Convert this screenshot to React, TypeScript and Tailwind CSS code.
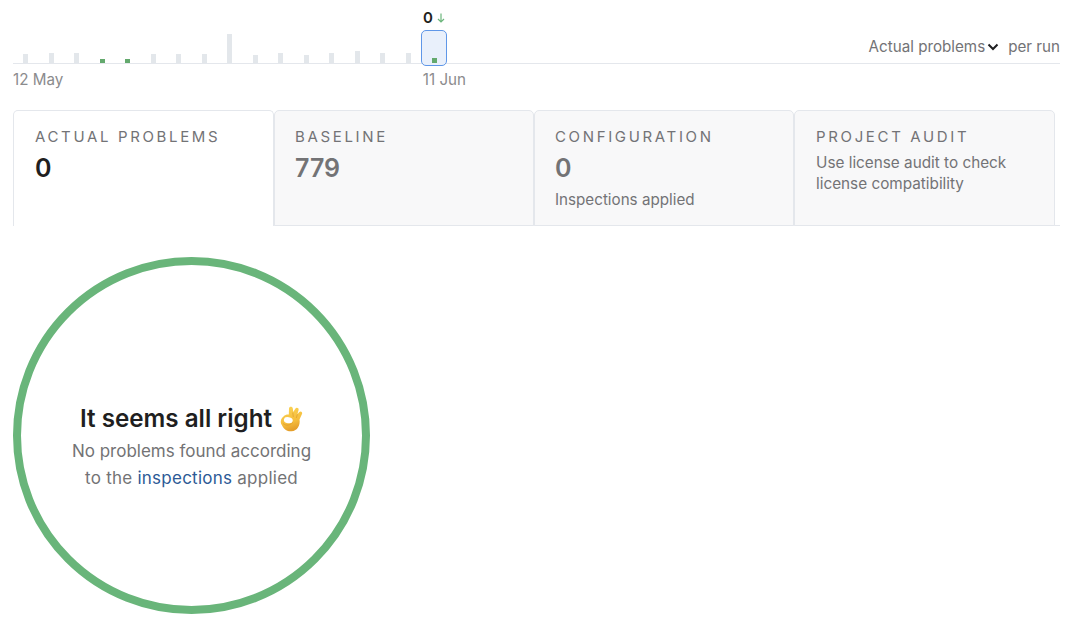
const bars = [9, 10, 10, 0, 0, 9, 9, 9, 29, 8, 10, 8, 10, 12, 10, 10];

function OkHand() {
  return (
    <svg width="24" height="26" viewBox="0 0 24 26" className="shrink-0">
      <defs>
        <linearGradient id="hand" x1="0" y1="0" x2="0.300" y2="1">
          <stop offset="0" stopColor="#fbd556" />
          <stop offset="0.700" stopColor="#f5bd3c" />
          <stop offset="1" stopColor="#e59f2b" />
        </linearGradient>
      </defs>
      <path
        d="M4.500 10.500 C6 8.800 8 8.300 9.800 8.500 L10 2.500 C10.100 0.400 13.300 0.300 13.800 2.400 L14.300 6 L16.300 2.700 C17.400 1 20.100 2 19.600 4 L18.400 8.300 L20.300 6 C21.500 4.600 23.800 5.900 23.100 7.700 L20.500 13.500 C21.500 19 18.500 25 12.500 25.300 C6.500 25.600 4 21.500 2.500 18.500 C1 15.500 2 12.500 4.500 10.500 Z"
        fill="url(#hand)"
      />
      <ellipse cx="9.300" cy="14.200" rx="4.500" ry="3" fill="#ffffff" transform="rotate(10 9.300 14.200)" />
      <path d="M13.800 6.500 L14.300 11 M18.400 8.300 L17.300 12" fill="none" stroke="#dc9c2c" strokeWidth="0.700" />
      <path d="M4 17.500 C7 20 11 19.500 13.800 16.500" fill="none" stroke="#dc9c2c" strokeWidth="0.700" />
    </svg>
  );
}

function Tab({
  title,
  value,
  sub,
  active,
  width,
  inset,
  children,
}: {
  title: string;
  value?: string;
  sub?: string;
  active?: boolean;
  width: string;
  inset: string;
  children?: React.ReactNode;
}) {
  return (
    <div
      className={`${width} ${inset} h-[116px] shrink-0 rounded-t-[5px] border-t border-l border-r border-[#e4e7ec] pt-[16px] ${
        active ? "bg-white" : "bg-[#f8f8f9] border-b"
      }`}
    >
      <div className="text-[15px] leading-[20px] tracking-[2.650px] text-[#737376]">{title}</div>
      {value && (
        <div className={`mt-[6px] text-[25px] leading-[30px] font-semibold ${active ? "text-[#1f1f21]" : "text-[#737375]"}`}>
          {value}
        </div>
      )}
      {sub && <div className="mt-[7px] text-[15.200px] leading-[20px] text-[#737376]">{sub}</div>}
      {children}
    </div>
  );
}

export default function App() {
  return (
    <div className="w-[1080px] h-[643px] bg-white overflow-hidden pl-[13px] pr-[20px] pt-[6px] font-['Inter',sans-serif]">
      <div className="h-[24px] pl-[410px] flex items-center gap-[4px]">
        <span className="text-[15px] font-semibold text-[#1f1f21]">0</span>
        <svg width="8" height="10" viewBox="0 0 8 10" fill="none" stroke="#6cb67c" strokeWidth="1.200">
          <path d="M4 0.500 V9 M1 6 L4 9 L7 6" />
        </svg>
      </div>

      <div className="h-[34px] flex items-end justify-between border-b border-[#e4e7ec]">
        <div className="flex items-end gap-[20.500px] pl-[10px]">
          {bars.map((h, i) =>
            h === 0 ? (
              <div key={i} className="w-[5px] h-[4px] bg-[#63a96d]" />
            ) : (
              <div key={i} style={{ height: h }} className="w-[5px] bg-[#e3e7eb]" />
            ),
          )}
          <div className="w-[26px] h-[36px] -ml-[10px] -mb-[3px] flex items-end justify-center pb-[2px] rounded-[5px] border border-[#5f97e8] bg-[#e9f0fb]">
            <div className="w-[5px] h-[5px] bg-[#63a96d]" />
          </div>
        </div>
        <div className="flex items-center mb-[6px] text-[15.200px] leading-[20px] text-[#737376]">
          <span>Actual problems</span>
          <svg width="12" height="8" viewBox="0 0 12 8" fill="none" stroke="#1f1f21" strokeWidth="2" className="ml-[2px]">
            <path d="M1.500 1.500 L6 6 L10.500 1.500" />
          </svg>
          <span className="ml-[9px]">per run</span>
        </div>
      </div>

      <div className="flex justify-between mt-[6px] pr-[594px] h-[20px] text-[15.200px] leading-[20px] text-[#8b8b8d]">
        <span>12 May</span>
        <span>11 Jun</span>
      </div>

      <div className="mt-[20px] flex border-b border-[#e4e7ec] h-[116px]">
        <Tab title="ACTUAL PROBLEMS" value="0" active width="w-[261px]" inset="pl-[21px]" />
        <Tab title="BASELINE" value="779" width="w-[260px]" inset="pl-[20px]" />
        <Tab title="CONFIGURATION" value="0" sub="Inspections applied" width="w-[260px]" inset="pl-[20px]" />
        <Tab title="PROJECT AUDIT" width="w-[261px]" inset="pl-[21px]">
          <div className="mt-[5px] text-[15.300px] leading-[21px] text-[#737376]">
            Use license audit to check
            <br />
            license compatibility
          </div>
        </Tab>
      </div>

      <div className="mt-[31px] w-[357px] h-[357px] rounded-full border-[8px] border-[#69b57a] flex flex-col items-center justify-center pt-[24px]">
        <div className="flex items-center gap-[7px] text-[24.200px] leading-[30px] font-semibold text-[#1f1f21]">
          <span>It seems all right</span>
          <OkHand />
        </div>
        <div className="mt-[4px] text-center text-[17px] leading-[27px] text-[#737375]">
          <div>No problems found according</div>
          <div className="tracking-[0.250px]">
            to the <span className="text-[#2c5a96]">inspections</span> applied
          </div>
        </div>
      </div>
    </div>
  );
}
